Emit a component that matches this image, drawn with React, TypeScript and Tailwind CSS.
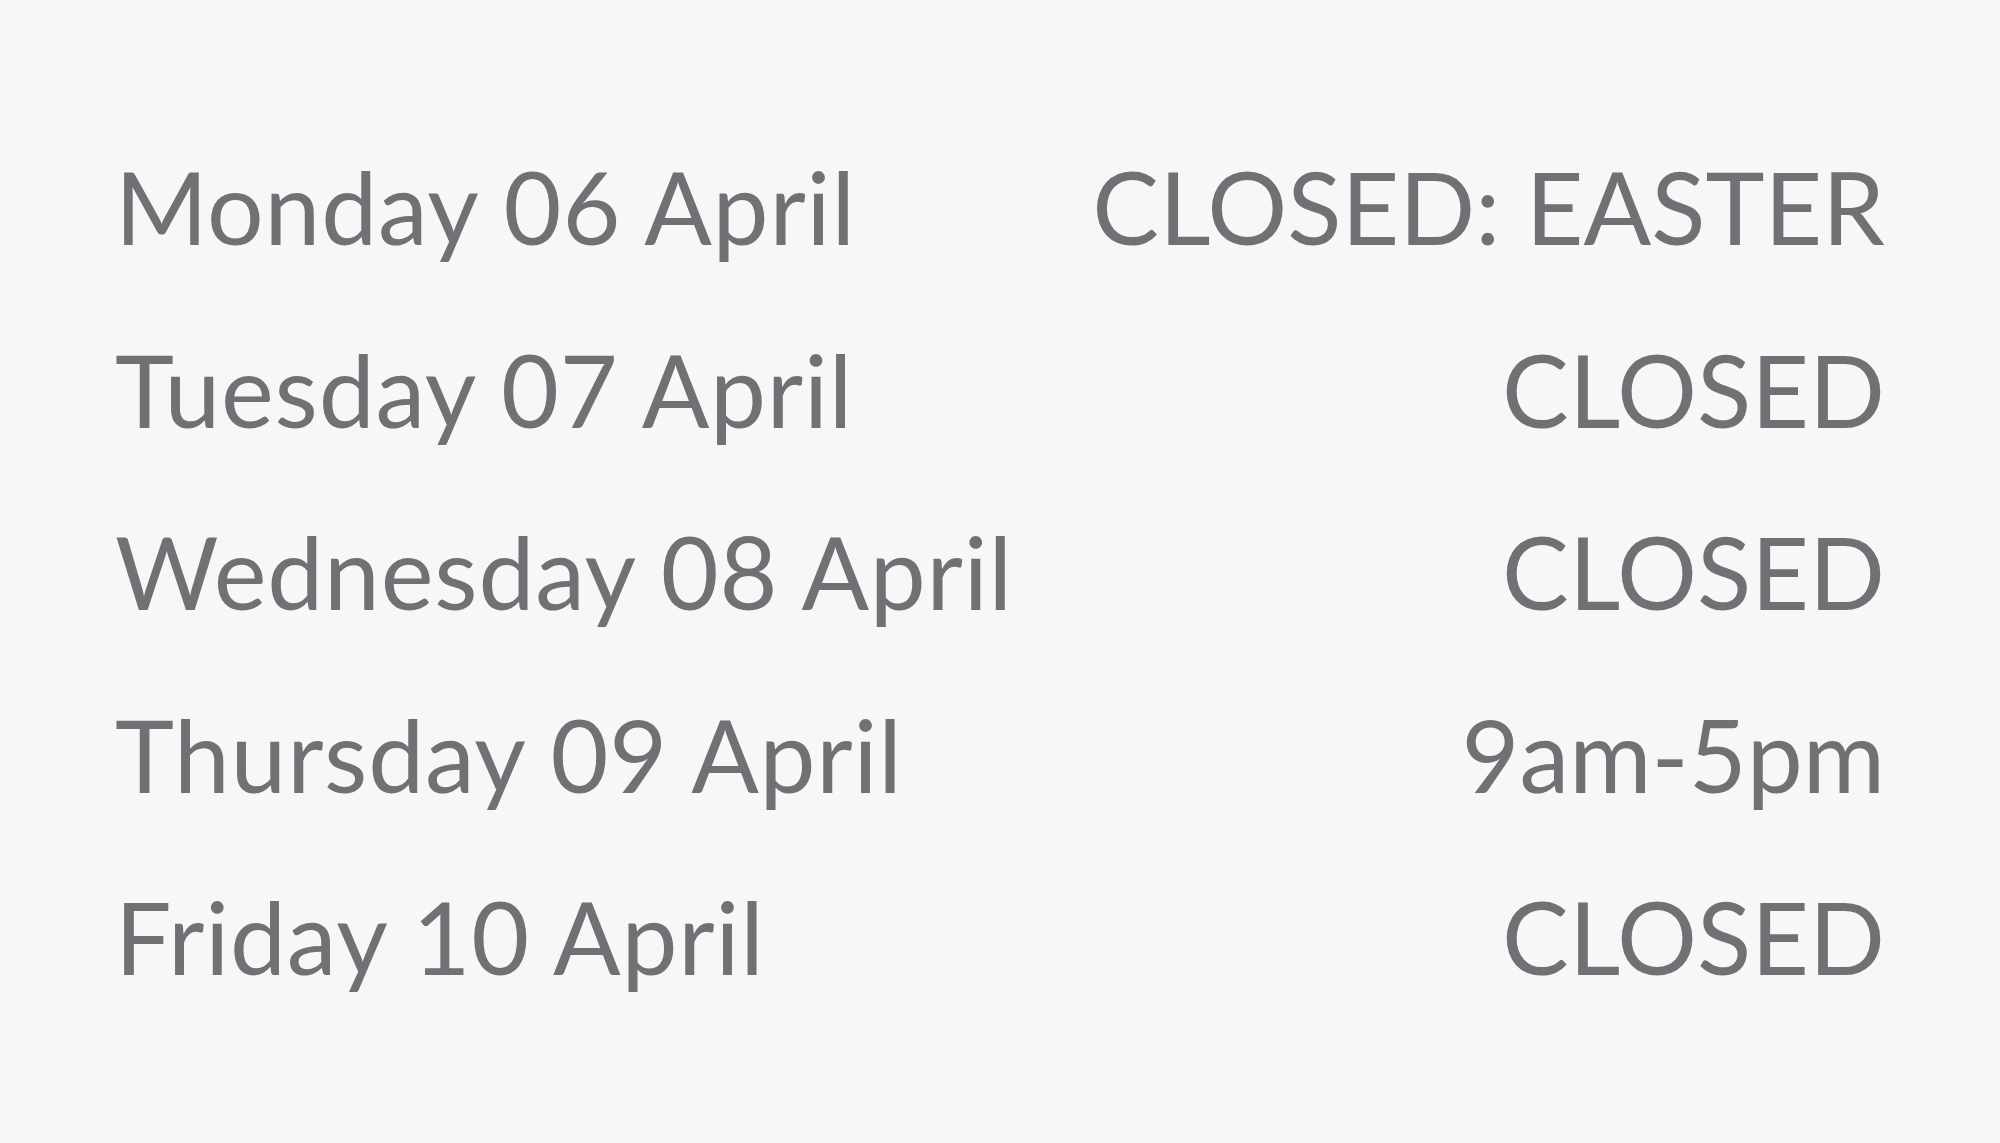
const hours = [
  { day: "Monday 06 April", status: "CLOSED: EASTER" },
  { day: "Tuesday 07 April", status: "CLOSED" },
  { day: "Wednesday 08 April", status: "CLOSED" },
  { day: "Thursday 09 April", status: "9am-5pm" },
  { day: "Friday 10 April", status: "CLOSED" },
];

export default function App() {
  return (
    <div className="min-h-screen w-full bg-[#f7f7f7] font-['Lato',sans-serif] text-[#717075]">
      <div className="flex flex-col px-[115px] pt-[115px]">
        {hours.map((row) => (
          <div
            key={row.day}
            className="flex items-baseline justify-between text-[100px] leading-[182.5px]"
          >
            <span className="tracking-[0.8px]">{row.day}</span>
            <span>{row.status}</span>
          </div>
        ))}
      </div>
    </div>
  );
}
